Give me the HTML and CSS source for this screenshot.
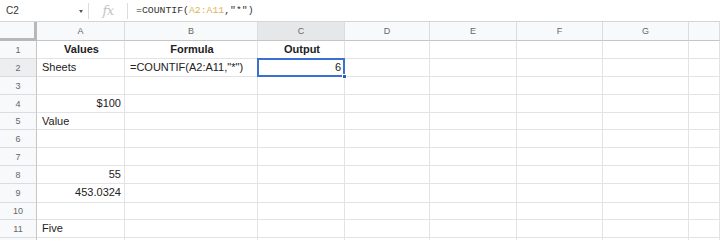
FILE: index.html
```html
<!DOCTYPE html>
<html>
<head>
<meta charset="utf-8">
<link rel="stylesheet" href="styles.css">
</head>
<body>
<div class="fbar">
  <div class="namebox"><span class="ref">C2</span><span class="caret"></span></div>
  <div class="sep"></div>
  <div class="fx">fx</div>
  <div class="sep"></div>
  <div class="formula">=COUNTIF(<span class="rng">A2:A11</span>,"*")</div>
</div>
<div class="sheet">
  <div class="corner"></div>
  <div class="ch">A</div><div class="ch">B</div><div class="ch active">C</div><div class="ch">D</div><div class="ch">E</div><div class="ch">F</div><div class="ch">G</div><div class="ch last"></div>

  <div class="rh">1</div><div class="c b ctr">Values</div><div class="c b ctr">Formula</div><div class="c b ctr">Output</div><div class="c"></div><div class="c"></div><div class="c"></div><div class="c"></div><div class="c"></div>
  <div class="rh active">2</div><div class="c">Sheets</div><div class="c">=COUNTIF(A2:A11,"*")</div><div class="c r sel">6<span class="handle"></span></div><div class="c"></div><div class="c"></div><div class="c"></div><div class="c"></div><div class="c"></div>
  <div class="rh">3</div><div class="c"></div><div class="c"></div><div class="c"></div><div class="c"></div><div class="c"></div><div class="c"></div><div class="c"></div><div class="c"></div>
  <div class="rh">4</div><div class="c r">$100</div><div class="c"></div><div class="c"></div><div class="c"></div><div class="c"></div><div class="c"></div><div class="c"></div><div class="c"></div>
  <div class="rh">5</div><div class="c">Value</div><div class="c"></div><div class="c"></div><div class="c"></div><div class="c"></div><div class="c"></div><div class="c"></div><div class="c"></div>
  <div class="rh">6</div><div class="c"></div><div class="c"></div><div class="c"></div><div class="c"></div><div class="c"></div><div class="c"></div><div class="c"></div><div class="c"></div>
  <div class="rh">7</div><div class="c"></div><div class="c"></div><div class="c"></div><div class="c"></div><div class="c"></div><div class="c"></div><div class="c"></div><div class="c"></div>
  <div class="rh">8</div><div class="c r">55</div><div class="c"></div><div class="c"></div><div class="c"></div><div class="c"></div><div class="c"></div><div class="c"></div><div class="c"></div>
  <div class="rh">9</div><div class="c r">453.0324</div><div class="c"></div><div class="c"></div><div class="c"></div><div class="c"></div><div class="c"></div><div class="c"></div><div class="c"></div>
  <div class="rh">10</div><div class="c"></div><div class="c"></div><div class="c"></div><div class="c"></div><div class="c"></div><div class="c"></div><div class="c"></div><div class="c"></div>
  <div class="rh">11</div><div class="c">Five</div><div class="c"></div><div class="c"></div><div class="c"></div><div class="c"></div><div class="c"></div><div class="c"></div><div class="c"></div>
  <div class="rh"></div><div class="c"></div><div class="c"></div><div class="c"></div><div class="c"></div><div class="c"></div><div class="c"></div><div class="c"></div><div class="c"></div>
</div>
</body>
</html>
```
FILE: styles.css
```css
html, body {
  margin: 0;
  padding: 0;
  background: #ffffff;
  overflow: hidden;
}
body {
  font-family: "Liberation Sans", Arial, sans-serif;
  color: #222;
  width: 720px;
  height: 240px;
}
.fbar {
  height: 22px;
  display: flex;
  align-items: center;
  box-sizing: border-box;
  border-bottom: 1px solid #d6d6d6;
}
.namebox {
  width: 88px;
  display: flex;
  align-items: center;
  justify-content: space-between;
  box-sizing: border-box;
  padding: 0 5px 0 6px;
  font-size: 10px;
  color: #333;
}
.caret {
  width: 0;
  height: 0;
  border-left: 2.5px solid transparent;
  border-right: 2.5px solid transparent;
  border-top: 3px solid #555;
  margin-top: 2px;
}
.sep {
  width: 1px;
  height: 16px;
  background: #dcdcdc;
}
.fx {
  width: 38px;
  text-align: center;
  font-family: "DejaVu Serif", "Liberation Serif", serif;
  font-style: italic;
  font-size: 13px;
  color: #c4c4c4;
  letter-spacing: -0.5px;
}
.formula {
  padding-left: 8px;
  font-family: "Liberation Mono", "DejaVu Sans Mono", monospace;
  font-size: 9.8px;
  color: #333;
}
.rng {
  color: #e0b35a;
}
.sheet {
  display: grid;
  grid-template-columns: 37px 88px 133px 87px 85px 87px 86px 86px 1fr;
  grid-template-rows: 19px 18px 18px 18px 18px 17px 18px 18px 18px 19px 17px 18px 18px;
}
.corner {
  background: #f8f9fa;
  border-right: 3px solid #b8b8b8;
  border-bottom: 3px solid #b8b8b8;
  box-sizing: border-box;
}
.ch {
  background: #f8f9fa;
  border-right: 1px solid #dadcdf;
  border-bottom: 1px solid #c6c6c6;
  box-sizing: border-box;
  font-size: 9px;
  color: #666;
  display: flex;
  align-items: center;
  justify-content: center;
}
.ch.active {
  background: #e6e7e9;
}
.rh {
  background: #f8f9fa;
  border-right: 1px solid #c6c6c6;
  border-bottom: 1px solid #dadcdf;
  box-sizing: border-box;
  font-size: 9px;
  color: #666;
  display: flex;
  align-items: center;
  justify-content: center;
}
.rh.active {
  background: #eceef0;
}
.c {
  border-right: 1px solid #e3e3e3;
  border-bottom: 1px solid #e3e3e3;
  box-sizing: border-box;
  font-size: 11px;
  line-height: 17px;
  padding: 0 3px 0 5px;
  white-space: nowrap;
  overflow: visible;
  color: #222;
}
.c.b {
  font-weight: bold;
}
.c.ctr {
  text-align: center;
}
.c.r {
  text-align: right;
}
.c.sel {
  position: relative;
  border: 2px solid #3b6fd0;
  margin: -1px 0 0 -1px;
  line-height: 15px;
  padding-right: 2px;
}
.handle {
  position: absolute;
  right: -4px;
  bottom: -4px;
  width: 5px;
  height: 5px;
  background: #2a5cc0;
  border: 1px solid #fff;
  box-sizing: border-box;
}
```
